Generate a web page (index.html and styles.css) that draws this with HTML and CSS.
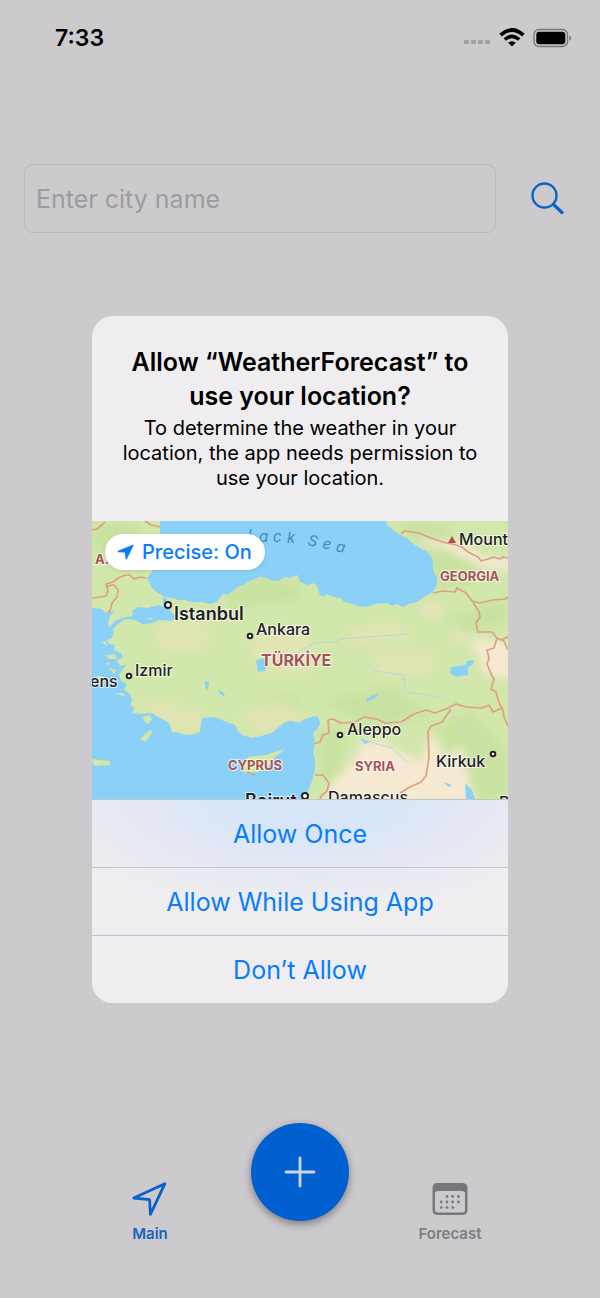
FILE: index.html
```html
<!DOCTYPE html>
<html lang="en">
<head>
<meta charset="utf-8">
<meta name="viewport" content="width=device-width, initial-scale=1">
<title>WeatherForecast</title>
<link rel="stylesheet" href="styles.css">
</head>
<body>
<div class="app">
  <header class="status">
    <time class="clock">7:33</time>
    <div class="indicators">
      <svg width="27" height="20" viewBox="0 0 27 20" fill="#a1a0a3"><rect y="12" width="5" height="4" rx="1"/><rect x="7" y="12" width="5" height="4" rx="1"/><rect x="14" y="12" width="5" height="4" rx="1"/><rect x="21" y="12" width="5" height="4" rx="1"/></svg>
      <svg width="26" height="20" viewBox="0 0 26 20" fill="none" stroke="#000" stroke-width="3.6"><path d="M1.6 7.2Q13-3.2 24.4 7.2"/><path d="M5.8 11.5Q13 5.2 20.2 11.5"/><path d="M9.2 14.7Q13 11.6 16.8 14.7L13 18.6Z" fill="#000" stroke="none"/></svg>
      <svg width="39" height="20" viewBox="0 0 39 20"><rect x="1" y="1.5" width="33.500" height="17" rx="5" fill="none" stroke="#777679" stroke-width="1.300"/><rect x="3.300" y="3.800" width="29" height="12.500" rx="3" fill="#000"/><path d="M36.300 7.500c2.500.8 2.500 4.500 0 5.300z" fill="#777679"/></svg>
    </div>
  </header>

  <form class="search">
    <input class="city" type="text" placeholder="Enter city name" aria-label="City name">
    <button class="icon-button" type="button" aria-label="Search">
      <svg width="34" height="34" viewBox="0 0 34 34" fill="none" stroke="#0862ce" stroke-linecap="round"><circle cx="14.500" cy="13.500" r="12" stroke-width="2.400"/><path d="M23.500 22.500L32 30.500" stroke-width="3.200"/></svg>
    </button>
  </form>

  <nav class="tabs">
    <a class="tab active" href="#main">
      <svg width="36" height="36" viewBox="0 0 36 36" fill="none" stroke="#0862ce" stroke-width="2.800" stroke-linejoin="round"><path d="M32.800 2.800 1.800 17 17.600 18.600 18.400 33.400Z"/></svg>
      Main
    </a>
    <button class="add" type="button" aria-label="Add">
      <svg width="32" height="32" viewBox="0 0 32 32" stroke="#cbd5e3" stroke-width="2.800" stroke-linecap="round"><path d="M2 16H30M16 2V30"/></svg>
    </button>
    <a class="tab" href="#forecast">
      <svg width="36" height="36" viewBox="0 0 36 36" fill="#77767a"><path fill-rule="evenodd" d="M6 2H30Q35.500 2 35.500 7V29Q35.500 34 30 34H6Q.5 34 .5 29V7Q.5 2 6 2ZM6 10Q3 10 3 12.500V29Q3 31.500 6 31.500H30Q33 31.500 33 29V12.500Q33 10 30 10Z"/><g><circle cx="15" cy="15.500" r="1.400"/><circle cx="20.700" cy="15.500" r="1.400"/><circle cx="26.400" cy="15.500" r="1.400"/><circle cx="9.300" cy="21" r="1.400"/><circle cx="15" cy="21" r="1.400"/><circle cx="20.700" cy="21" r="1.400"/><circle cx="26.400" cy="21" r="1.400"/><circle cx="9.300" cy="26.600" r="1.400"/><circle cx="15" cy="26.600" r="1.400"/><circle cx="20.700" cy="26.600" r="1.400"/></g></svg>
      Forecast
    </a>
  </nav>

  <div class="overlay">
    <section class="dialog" role="alertdialog" aria-labelledby="title" aria-describedby="reason">
      <div class="message">
        <h1 id="title">Allow “WeatherForecast” to<br>use your location?</h1>
        <p id="reason">To determine the weather in your<br>location, the app needs permission to<br>use your location.</p>
      </div>
      <div class="map">
        <svg class="map-art" viewBox="0 0 416 278" preserveAspectRatio="xMidYMid slice">
          <defs><filter id="soft"><feGaussianBlur stdDeviation="4"/></filter></defs>
          <rect width="416" height="278" fill="#d2e7ab"/>
          <g filter="url(#soft)">
            <path fill="#c9e2a1" d="M0 0H45V30H0ZM130 66L175 56 215 66 205 80 140 86ZM300 0H350L360 20 395 30 380 65 345 65 325 22ZM350 100L416 78V100L370 116ZM230 180L300 165 340 195 280 205ZM340 210L380 190 416 230V278H390L370 240ZM180 175H205V195H180ZM225 210L250 205V260H228Z"/>
            <path fill="#e1e4b3" d="M60 100H115V130H70ZM40 175L75 182 110 190 110 210H82ZM145 195L190 180 215 195 170 213ZM155 115L215 105 225 150 170 155ZM250 110L300 100 325 115 260 125ZM285 130H340V155H285Z"/>
            <path fill="#f6e9d2" d="M232 282L240 262 262 240 270 220 290 220 310 232 330 240 337 217 344 215 350 240 370 225 380 278V282ZM378 118L420 122V158L395 155ZM330 18L370 22 395 36 420 38 420 50 390 46 355 28 330 24Z"/>
            <path fill="#ece2bd" d="M325 84L348 82 350 93 335 96ZM355 105L375 112 370 125Z"/>
          </g>
          <g fill="#8bd1f7">
            <path d="M68 0V40L55 57 60 67 66 72 73 76 80 77 86 79 93 79 99 81 110 81 119 83 126 80 130 74 137 73 146 66 153 63 160 59 168 56 175 57 180 60 186 60 193 56 198 57 205 54 208 61 216 64 221 62 225 65 228 74 232 76 235 73 241 76 248 77 252 81 258 82 265 85 275 86 283 83 295 82 300 85 305 83 311 86 317 83 325 81 332 76 341 71 345 64 345 57 342 52 341 47 341 40 338 34 334 30 328 27 321 23 315 17 308 14 301 9 296 5 294 0Z"/>
            <path d="M71 76L75 78 74 86 80 91 84 96 80 100 68 99 60 102 51 103 43 99 33 98 26 103 20 109 18 105 24 99 34 96 41 95 40 90 46 86 56 87 66 84 71 86Z"/>
            <path d="M0 87L9 88 14 92 23 90 18 95 16 104 22 111 20 117 15 119 17 123 23 124 22 129 29 132 31 137 25 139 28 145 35 143 30 149 27 154 29 160 35 163 32 168 38 173 40 180 38 184 43 187 40 192 49 193 60 192 66 196 76 201 79 207 80 211 88 212 93 214 103 213 108 211 109 203 110 197 118 196 126 197 132 200 138 202 143 204 146 210 150 214 160 217 169 215 180 212 187 206 193 201 199 200 208 202 213 198 218 197 221 195 226 196 228 202 226 207 221 212 223 222 221 231 223 238 223 249 220 260 217 268 213 278H0Z"/>
            <path d="M164 139L173 137 175 141 173 150 166 151ZM113 160L117 161 116 169 113 166ZM126 168L132 172 133 176 128 173ZM359 146L373 144 375 140 383 139 380 144 376 146 376 154 364 156 358 152ZM274 178L282 174 288 172 283 177 275 181ZM373 262L380 269 383 278H374ZM351 261L360 264 357 266ZM268 217L278 221 273 223Z"/>
          </g>
          <g fill="#d5e5a3">
            <path d="M156 236L173 234 193 228 183 236 178 244 166 251 153 252 148 247ZM0 238L8 239 18 240V244L2 245ZM49 217L59 208 60 212 54 220 50 220ZM13 134L23 133 25 138 17 138ZM17 147L25 149 22 153ZM22 173L31 172 33 175ZM5 155L9 155 13 162 7 161ZM14 142L18 141 16 145ZM50 196L58 194 60 199 55 203ZM10 121L14 120 15 126ZM55 99L58 96 61 98Z"/>
          </g>
          <g fill="none" stroke="#b6d8df" stroke-width="1">
            <path d="M202 141L207 130 217 125 222 122 237 121 242 122 248 118 314 113M272 138L284 150 312 154 313 171 338 174 349 177M268 217L285 223 300 227 315 241M357 188L365 200 379 220"/>
          </g>
          <g fill="none" stroke="#dda083" stroke-width="1.700" stroke-linejoin="round">
            <path d="M0 9L5 8 10 4 13 1M53 0L59 4 68 6M0 77L9 76 14 75 16 70 14 63 21 61 26 57 34 54 38 54 42 58 48 56 54 57M15 65L22 64 26 69 25 76 20 82 18 90 15 92"/>
            <path d="M309 13L313 10 327 12 339 17 351 21 364 24 370 26 376 31 386 36 389 40 396 38 402 36 408 38 411 36 416 37M341 72L351 70 363 71 365 67 374 72 380 80 388 82 401 79 413 78 416 76M381 81L387 91 388 96 384 102 386 111 400 111 405 117 412 120 416 129M405 117L402 127 395 129 397 137 395 143 400 155 402 158 399 168 404 171 407 182 411 189 412 196 416 205M408 119L416 116"/>
            <path d="M222 223L228 221 231 214 237 212 236 199 241 198 249 202 263 201 272 196 285 198 293 202 309 201 322 193 334 189 343 192 356 187 364 183 374 186 390 187 397 184 401 191 410 187M359 188L350 201 339 205 336 210 337 236 334 255 329 261 318 266 308 272M223 254L231 254 237 262 235 270 229 275 228 278M155 251L163 254"/>
          </g>
          <g class="sea"><text x="156 167 181 195" y="19 21 21 22">lack</text><text transform="translate(215 24) rotate(12)" x="0 15 29" y="0">Sea</text></g>
          <path d="M356 22L360 15 364 22Z" fill="#a65048"/>
          <g class="dots"><circle cx="76" cy="84" r="3"/><circle cx="158" cy="115" r="2.300"/><circle cx="37" cy="155" r="2.300"/><circle cx="248" cy="214" r="2.300"/><circle cx="401" cy="233" r="2.300"/><circle cx="213" cy="275" r="3"/></g>
          <g class="place">
            <text class="major" x="82" y="99">Istanbul</text>
            <text x="164" y="114">Ankara</text>
            <text x="43" y="155">Izmir</text>
            <text x="-2" y="166">ens</text>
            <text x="255" y="214">Aleppo</text>
            <text x="344" y="246">Kirkuk</text>
            <text x="367" y="24">Mount</text>
            <text x="236" y="282">Damascus</text>
            <text class="major" x="153" y="286">Beirut</text>
            <text x="407" y="287">B</text>
          </g>
          <g class="country">
            <text class="large" x="169" y="145">TÜRKİYE</text><text x="348" y="60">GEORGIA</text><text x="136" y="249">CYPRUS</text><text x="263" y="250">SYRIA</text><text x="3" y="43">A..</text>
          </g>
        </svg>
        <button class="precise" type="button">
          <svg width="17" height="16" viewBox="0 0 17 16" fill="#087cff"><path d="M15.800.7 1 6.800Q.2 7.900 1.500 8.200L8 8.500 8.500 14.800Q9 16.200 10 14.800L16.500 1.500Q16.800.3 15.800.7Z"/></svg>
          Precise: On
        </button>
      </div>
      <div class="choices">
        <button type="button">Allow Once</button>
        <button type="button">Allow While Using App</button>
        <button type="button">Don’t Allow</button>
      </div>
    </section>
  </div>
</div>
</body>
</html>
```

FILE: styles.css
```css
* { box-sizing: border-box; }
body { margin: 0; background: #cccacd; color: #000; font-family: Inter, "Liberation Sans", sans-serif; }
button { margin: 0; border: 0; font: inherit; cursor: pointer; }
svg { display: block; }
.app { position: relative; display: flex; flex-direction: column; min-height: 100vh; }
.status { display: flex; align-items: center; justify-content: space-between; height: 76px; padding: 0 28px 0 55px; }
.clock { font-size: 23px; font-weight: 600; line-height: 28px; }
.indicators { display: flex; align-items: center; gap: 8px; }
.search { display: flex; align-items: center; gap: 34px; margin-top: 88px; padding: 0 36px 0 24px; }
.city { flex: 1; min-width: 0; height: 69px; padding: 0 11px; border: 1px solid #b8b7ba; border-radius: 9px; background: transparent; color: #000; font: 25px Inter, sans-serif; }
.city::placeholder { color: #9c9b9f; opacity: 1; }
.icon-button { padding: 0; background: transparent; }
.tabs { display: grid; grid-template-columns: repeat(3, 1fr); justify-items: center; align-items: end; margin-top: auto; padding: 0 75px 54px; }
.tab { display: flex; flex-direction: column; align-items: center; gap: 7px; color: #7e7d81; font-size: 15px; font-weight: 600; line-height: 20px; text-decoration: none; }
.tab.active { color: #1765c0; }
.add { display: grid; place-items: center; width: 98px; height: 98px; margin-bottom: 23px; padding: 0; border-radius: 50%; background: #0060cf; box-shadow: 0 3px 9px rgba(0, 0, 0, .4); }
.overlay { position: absolute; inset: 0; display: grid; place-items: center; padding: 21px 92px 0; }
.dialog { width: 100%; max-width: 416px; overflow: hidden; border-radius: 21px; background: #efedf0; }
.message { padding: 29px 16px 30px; text-align: center; }
h1 { margin: 0; font-size: 25px; font-weight: 600; line-height: 34px; }
p { margin: 3px 0 0; font-size: 20px; line-height: 25px; white-space: nowrap; }
.map { position: relative; height: 278px; overflow: hidden; }
.map-art { width: 100%; height: 100%; }
.precise { position: absolute; top: 13px; left: 13px; display: flex; align-items: center; gap: 8px; height: 36px; padding: 0 13px 0 12px; border-radius: 18px; background: #fff; color: #087cff; font-size: 20px; font-weight: 500; box-shadow: 0 1px 4px rgba(0, 0, 0, .12); white-space: nowrap; }
.place { fill: #222; stroke: #fff; stroke-width: 2px; stroke-opacity: .7; paint-order: stroke; font-size: 16px; font-weight: 500; }
.major { font-size: 18px; font-weight: 600; }
.country { fill: #a65353; stroke: #fff; stroke-width: 2px; stroke-opacity: .7; paint-order: stroke; font-size: 13px; font-weight: 700; }
.large { font-size: 16px; }
.sea { fill: #4585b7; font-size: 15px; font-style: italic; }
.dots { fill: #fff; stroke: #222; stroke-width: 2px; }
.choices { display: flex; flex-direction: column; background: radial-gradient(ellipse 220px 90px at 52% 0, #d6e6f8 35%, #e4e8f3 75%, #efedf0 125%); }
.choices button { height: 68px; padding: 0; border-top: 1px solid #c4c5cb; background: transparent; color: #087cff; font-size: 25px; }
```
